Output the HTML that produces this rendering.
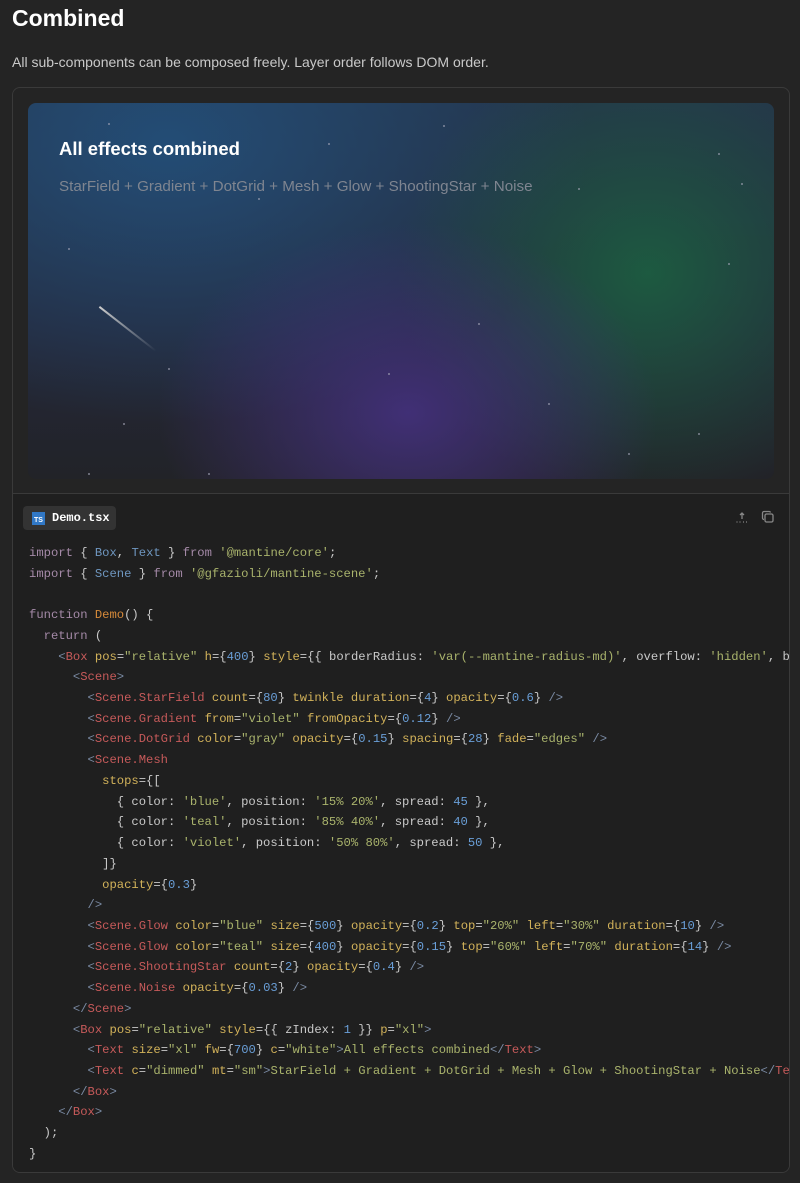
<!DOCTYPE html>
<html><head><meta charset="utf-8"><style>
*{margin:0;padding:0;box-sizing:border-box}
body{width:800px;height:1183px;background:#242424;font-family:"Liberation Sans",sans-serif;color:#c9c9c9;overflow:hidden;position:relative}
h1{position:absolute;left:12px;top:5px;font-size:23px;font-weight:700;color:#fff}
.desc{position:absolute;left:12px;top:54px;font-size:14px;color:#c9c9c9}
.card{position:absolute;left:12px;top:87px;width:778px;height:1086px;border:1px solid #3a3a3a;border-radius:8px;background:#242424;overflow:hidden}
.prev{position:absolute;left:15px;top:15px;width:746px;height:376px;border-radius:8px;overflow:hidden;background:
radial-gradient(ellipse 250px 190px at 380px 310px,rgba(72,50,135,.8),transparent 100%),
radial-gradient(ellipse 250px 230px at 620px 170px,rgba(28,95,65,.9),transparent 100%),
radial-gradient(ellipse 420px 280px at 140px 40px,rgba(35,78,120,.95),transparent 100%),
linear-gradient(180deg,#25344a 0%,#24283a 60%,#222328 100%)}
.prev h2{position:absolute;left:31px;top:35px;font-size:18.5px;font-weight:700;color:#fff}
.prev p{position:absolute;left:31px;top:75px;font-size:15.2px;color:#7f8590}
.star{position:absolute;width:2px;height:2px;background:#aab;border-radius:50%;opacity:.7}
.shoot{position:absolute;left:72px;top:203px;width:72px;height:1.5px;background:linear-gradient(90deg,#ccc,transparent);transform:rotate(38deg);transform-origin:0 0}
.div{position:absolute;left:0;top:405px;width:100%;height:1px;background:#3a3a3a}
.code{position:absolute;left:0;top:406px;width:100%;bottom:0;background:#1f1f1f}
.pill{position:absolute;left:10px;top:12px;width:93px;height:24px;background:#333;border-radius:4px;font-family:"Liberation Mono",monospace;font-size:12px;font-weight:700;color:#fff;padding:5px 0 0 29px}
.ts{position:absolute;left:9px;top:6px;width:13px;height:13px;background:#3178c6;color:#fff;font-size:7px;font-family:"Liberation Sans";font-weight:700;padding:4px 0 0 2px;line-height:9px}
pre{position:absolute;left:16px;top:49px;font-family:"Liberation Mono",monospace;font-size:12.2px;line-height:20.72px;color:#c9c9c9;white-space:pre}
.k{color:#a58aa8}.i{color:#6f97c0}.s{color:#a9b36c}.f{color:#d68a3a}.b{color:#7a8aa3}.t{color:#c65a5a}.a{color:#d2b25a}.n{color:#6a9fd8}
</style></head><body>
<h1>Combined</h1>
<div class="desc">All sub-components can be composed freely. Layer order follows DOM order.</div>
<div class="card">
<div class="prev">
<div class="star" style="left:80px;top:20px"></div><div class="star" style="left:415px;top:22px"></div><div class="star" style="left:690px;top:50px"></div><div class="star" style="left:550px;top:85px"></div><div class="star" style="left:713px;top:80px"></div><div class="star" style="left:40px;top:145px"></div><div class="star" style="left:450px;top:220px"></div><div class="star" style="left:140px;top:265px"></div><div class="star" style="left:520px;top:300px"></div><div class="star" style="left:60px;top:370px"></div><div class="star" style="left:670px;top:330px"></div><div class="star" style="left:360px;top:270px"></div><div class="star" style="left:230px;top:95px"></div><div class="star" style="left:700px;top:160px"></div><div class="star" style="left:180px;top:370px"></div><div class="star" style="left:600px;top:350px"></div><div class="star" style="left:300px;top:40px"></div><div class="star" style="left:95px;top:320px"></div>
<div class="shoot"></div>
<h2>All effects combined</h2>
<p>StarField + Gradient + DotGrid + Mesh + Glow + ShootingStar + Noise</p>
</div>
<div class="div"></div>
<div class="code">
<div class="pill"><span class="ts">TS</span>Demo.tsx</div>
<svg style="position:absolute;left:722px;top:17px" width="14" height="14" viewBox="0 0 14 14" fill="none" stroke="#888" stroke-width="1.3"><path d="M7 2v6M5 4l2-2 2 2"/><path d="M1.5 11h1M4.5 11h1M8 11h1M11 11h1"/></svg>
<svg style="position:absolute;left:748px;top:16px" width="14" height="14" viewBox="0 0 14 14" fill="none" stroke="#888" stroke-width="1.3"><rect x="4" y="4" width="8" height="8" rx="1.5"/><path d="M9.5 2.5A1.5 1.5 0 0 0 8 1.5H3A1.5 1.5 0 0 0 1.5 3v5A1.5 1.5 0 0 0 3 9.5"/></svg>
<pre><span class="k">import</span> { <span class="i">Box</span>, <span class="i">Text</span> } <span class="k">from</span> <span class="s">'@mantine/core'</span>;
<span class="k">import</span> { <span class="i">Scene</span> } <span class="k">from</span> <span class="s">'@gfazioli/mantine-scene'</span>;

<span class="k">function</span> <span class="f">Demo</span>() {
  <span class="k">return</span> (
    <span class="b">&lt;</span><span class="t">Box</span> <span class="a">pos</span>=<span class="s">"relative"</span> <span class="a">h</span>={<span class="n">400</span>} <span class="a">style</span>={{ borderRadius: <span class="s">'var(--mantine-radius-md)'</span>, overflow: <span class="s">'hidden'</span>, b
      <span class="b">&lt;</span><span class="t">Scene</span><span class="b">&gt;</span>
        <span class="b">&lt;</span><span class="t">Scene.StarField</span> <span class="a">count</span>={<span class="n">80</span>} <span class="a">twinkle</span> <span class="a">duration</span>={<span class="n">4</span>} <span class="a">opacity</span>={<span class="n">0.6</span>} <span class="b">/&gt;</span>
        <span class="b">&lt;</span><span class="t">Scene.Gradient</span> <span class="a">from</span>=<span class="s">"violet"</span> <span class="a">fromOpacity</span>={<span class="n">0.12</span>} <span class="b">/&gt;</span>
        <span class="b">&lt;</span><span class="t">Scene.DotGrid</span> <span class="a">color</span>=<span class="s">"gray"</span> <span class="a">opacity</span>={<span class="n">0.15</span>} <span class="a">spacing</span>={<span class="n">28</span>} <span class="a">fade</span>=<span class="s">"edges"</span> <span class="b">/&gt;</span>
        <span class="b">&lt;</span><span class="t">Scene.Mesh</span>
          <span class="a">stops</span>={[
            { color: <span class="s">'blue'</span>, position: <span class="s">'15% 20%'</span>, spread: <span class="n">45</span> },
            { color: <span class="s">'teal'</span>, position: <span class="s">'85% 40%'</span>, spread: <span class="n">40</span> },
            { color: <span class="s">'violet'</span>, position: <span class="s">'50% 80%'</span>, spread: <span class="n">50</span> },
          ]}
          <span class="a">opacity</span>={<span class="n">0.3</span>}
        <span class="b">/&gt;</span>
        <span class="b">&lt;</span><span class="t">Scene.Glow</span> <span class="a">color</span>=<span class="s">"blue"</span> <span class="a">size</span>={<span class="n">500</span>} <span class="a">opacity</span>={<span class="n">0.2</span>} <span class="a">top</span>=<span class="s">"20%"</span> <span class="a">left</span>=<span class="s">"30%"</span> <span class="a">duration</span>={<span class="n">10</span>} <span class="b">/&gt;</span>
        <span class="b">&lt;</span><span class="t">Scene.Glow</span> <span class="a">color</span>=<span class="s">"teal"</span> <span class="a">size</span>={<span class="n">400</span>} <span class="a">opacity</span>={<span class="n">0.15</span>} <span class="a">top</span>=<span class="s">"60%"</span> <span class="a">left</span>=<span class="s">"70%"</span> <span class="a">duration</span>={<span class="n">14</span>} <span class="b">/&gt;</span>
        <span class="b">&lt;</span><span class="t">Scene.ShootingStar</span> <span class="a">count</span>={<span class="n">2</span>} <span class="a">opacity</span>={<span class="n">0.4</span>} <span class="b">/&gt;</span>
        <span class="b">&lt;</span><span class="t">Scene.Noise</span> <span class="a">opacity</span>={<span class="n">0.03</span>} <span class="b">/&gt;</span>
      <span class="b">&lt;/</span><span class="t">Scene</span><span class="b">&gt;</span>
      <span class="b">&lt;</span><span class="t">Box</span> <span class="a">pos</span>=<span class="s">"relative"</span> <span class="a">style</span>={{ zIndex: <span class="n">1</span> }} <span class="a">p</span>=<span class="s">"xl"</span><span class="b">&gt;</span>
        <span class="b">&lt;</span><span class="t">Text</span> <span class="a">size</span>=<span class="s">"xl"</span> <span class="a">fw</span>={<span class="n">700</span>} <span class="a">c</span>=<span class="s">"white"</span><span class="b">&gt;</span><span class="s">All effects combined</span><span class="b">&lt;/</span><span class="t">Text</span><span class="b">&gt;</span>
        <span class="b">&lt;</span><span class="t">Text</span> <span class="a">c</span>=<span class="s">"dimmed"</span> <span class="a">mt</span>=<span class="s">"sm"</span><span class="b">&gt;</span><span class="s">StarField + Gradient + DotGrid + Mesh + Glow + ShootingStar + Noise</span><span class="b">&lt;/</span><span class="t">Te</span>
      <span class="b">&lt;/</span><span class="t">Box</span><span class="b">&gt;</span>
    <span class="b">&lt;/</span><span class="t">Box</span><span class="b">&gt;</span>
  );
}</pre>
</div>
</div>
</body></html>
